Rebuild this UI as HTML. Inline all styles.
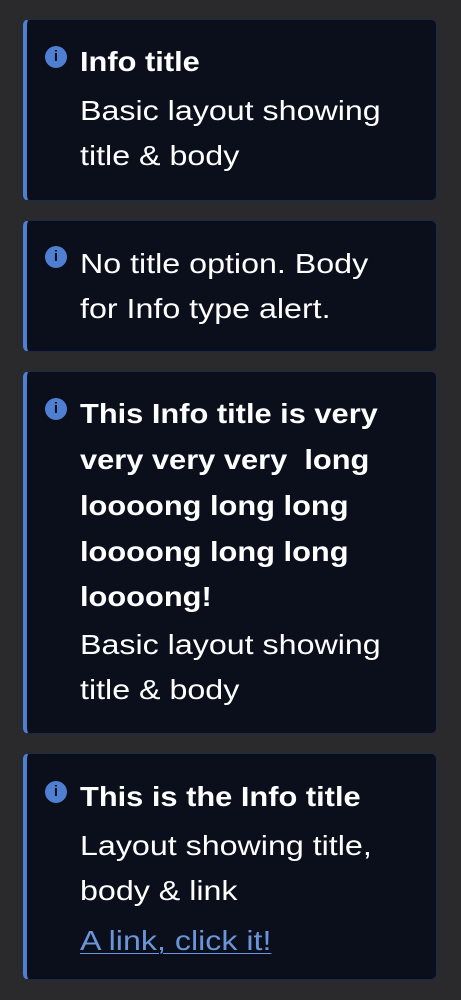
<!DOCTYPE html>
<html><head><style>
html,body{margin:0;padding:0;background:#2a292c;width:461px;height:1000px;overflow:hidden}
.c{position:absolute;left:23px;width:414px;background:#0a0f1b;border:1px solid #1c2a45;border-left:4px solid #4f7fd0;border-radius:6px;box-sizing:border-box}
.t{position:absolute;left:80px;white-space:nowrap;font-family:"Liberation Sans",sans-serif;font-size:28px;color:#fff;line-height:30px;transform:scaleX(1.15);transform-origin:0 50%}
.b{font-weight:bold;transform:scaleX(1.10)}
.l{color:#6b95d8;text-decoration:underline;text-underline-offset:3px;text-decoration-thickness:1px}
.i{position:absolute;left:45px;width:22px;height:22px;border-radius:50%;background:#4f7fd0;color:#0a0f1b;font:bold 15px/22px "Liberation Sans",sans-serif;text-align:center}
</style></head><body>
<div class="c" style="top:19px;height:182px"></div>
<div class="i" style="top:46px">i</div>
<div class="t b" style="top:47px">Info title</div>
<div class="t" style="top:96px">Basic layout showing</div>
<div class="t" style="top:141px">title &amp; body</div>

<div class="c" style="top:220px;height:132px"></div>
<div class="i" style="top:246px">i</div>
<div class="t" style="top:249px">No title option. Body</div>
<div class="t" style="top:294px">for Info type alert.</div>

<div class="c" style="top:371px;height:363px"></div>
<div class="i" style="top:398px">i</div>
<div class="t b" style="top:399px">This Info title is very</div>
<div class="t b" style="top:445px">very very very&nbsp; long</div>
<div class="t b" style="top:491px">loooong long long</div>
<div class="t b" style="top:537px">loooong long long</div>
<div class="t b" style="top:582px">loooong!</div>
<div class="t" style="top:630px">Basic layout showing</div>
<div class="t" style="top:675px">title &amp; body</div>

<div class="c" style="top:753px;height:227px"></div>
<div class="i" style="top:781px">i</div>
<div class="t b" style="top:782px">This is the Info title</div>
<div class="t" style="top:831px">Layout showing title,</div>
<div class="t" style="top:876px">body &amp; link</div>
<div class="t l" style="top:926px">A link, click it!</div>
</body></html>
